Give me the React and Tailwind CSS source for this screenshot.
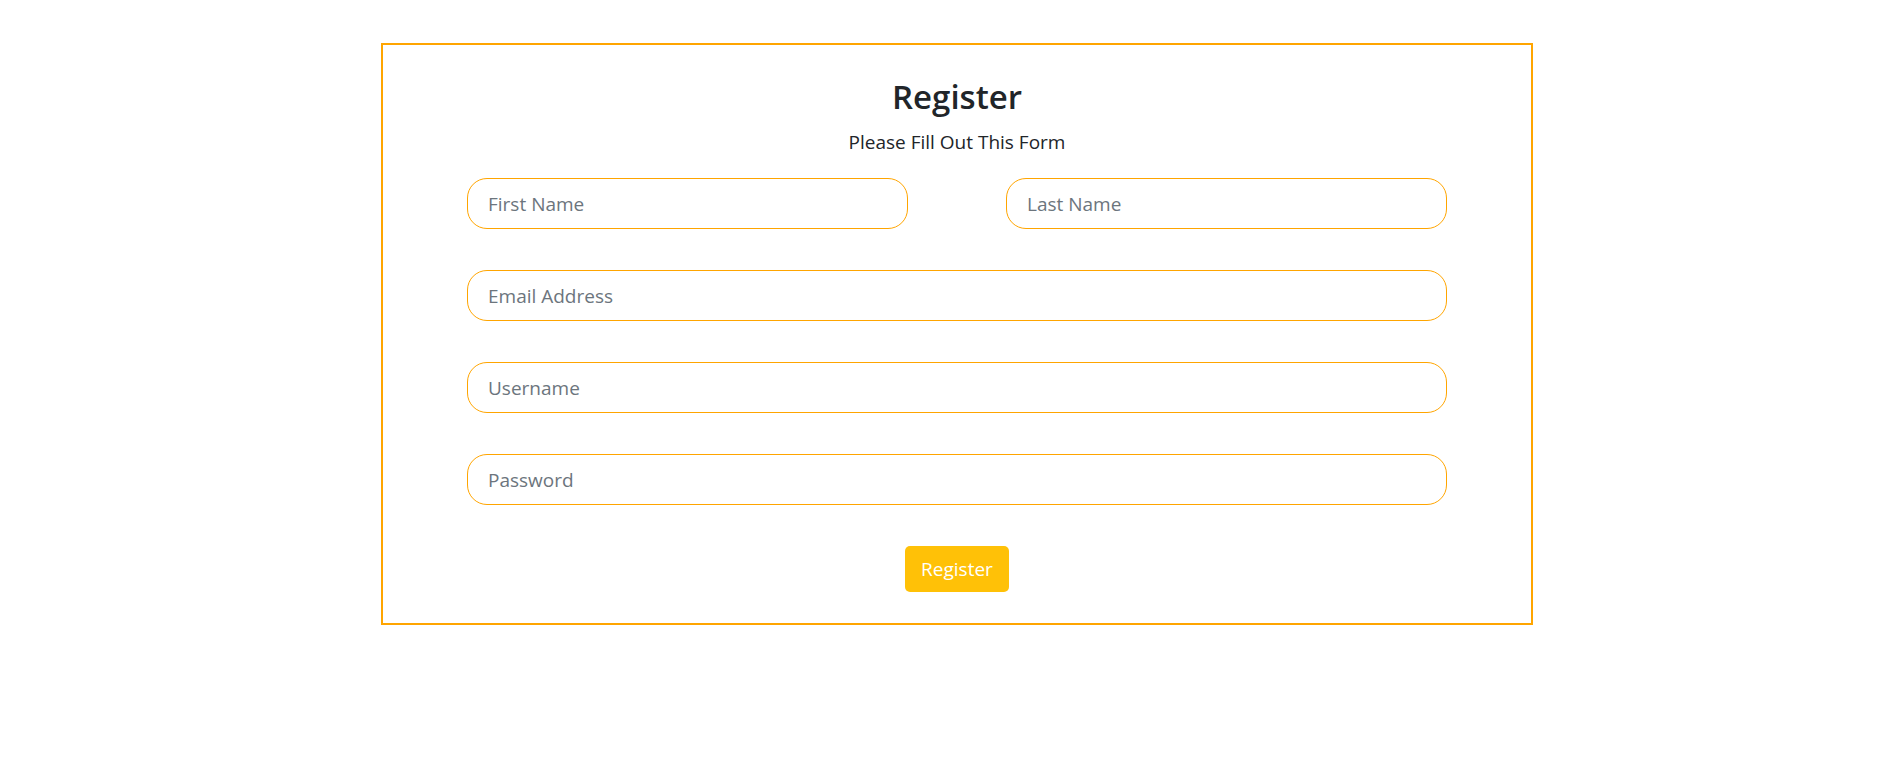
import React from "react";

export default function App() {
  const inputCls =
    "block w-full h-[51px] rounded-[20px] border border-[#ffa500] bg-white px-5 text-[19px] leading-[30px] text-[#212529] outline-none placeholder:text-[#6c757d]";
  return (
    <div
      className="min-h-screen bg-white pt-[43px]"
      style={{ fontFamily: '"Open Sans", "Noto Sans", Arial, sans-serif' }}
    >
      <div className="ml-[381px] w-[1152px] border-2 border-[#ffa500] px-[84px] pt-[31px] pb-[31px]">
        <h2 className="text-center text-[33px] font-semibold leading-[41px] text-[#212529]">
          Register
        </h2>
        <p className="mt-[10px] text-center text-[19px] leading-[30px] text-[#212529]">
          Please Fill Out This Form
        </p>
        <form
          className="mt-[21px] flex flex-col gap-[41px]"
          onSubmit={(e) => e.preventDefault()}
        >
          <div className="grid grid-cols-2 gap-[98px]">
            <input type="text" placeholder="First Name" className={inputCls} />
            <input type="text" placeholder="Last Name" className={inputCls} />
          </div>
          <input type="email" placeholder="Email Address" className={inputCls} />
          <input type="text" placeholder="Username" className={inputCls} />
          <input type="password" placeholder="Password" className={inputCls} />
          <button
            type="submit"
            className="self-center h-[46px] w-[104px] rounded-[5px] bg-[#ffc107] text-[19px] leading-[28px] text-white"
          >
            Register
          </button>
        </form>
      </div>
    </div>
  );
}
